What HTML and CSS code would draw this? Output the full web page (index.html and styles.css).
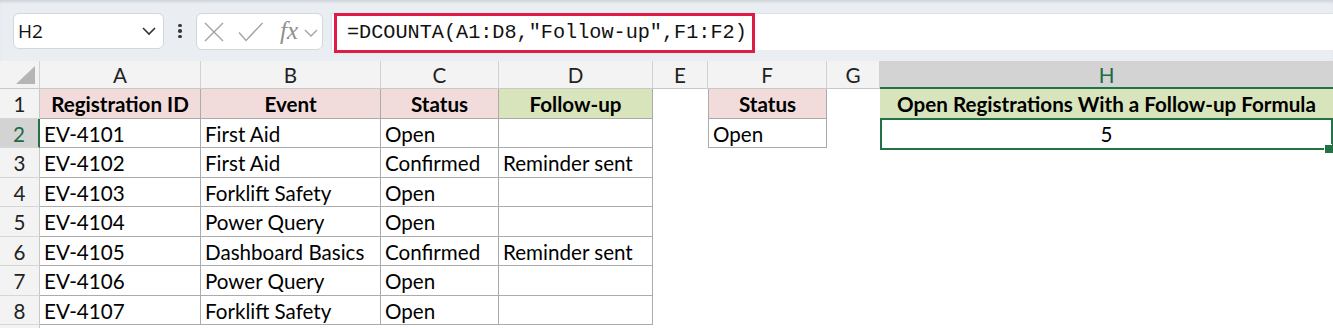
FILE: index.html
```html
<!DOCTYPE html>
<html lang="en">
<head>
    <meta charset="UTF-8">
    <meta name="viewport" content="width=device-width, initial-scale=1.0">
    <title>DCOUNTA - Follow-up</title>
    <link rel="stylesheet" href="styles.css">
</head>
<body>
    <!-- Formula bar -->
    <div class="formula-bar">
        <div class="name-box">
            <span>H2</span>
            <svg width="16" height="10" viewBox="0 0 16 10"><polyline points="2,2 8,8 14,2" fill="none" stroke="#333" stroke-width="1.6"/></svg>
        </div>
        <div class="dots"><i></i><i></i><i></i></div>
        <div class="icon-box">
            <svg width="20" height="20" viewBox="0 0 20 20"><path d="M1 1 L19 19 M19 1 L1 19" stroke="#a3a3a3" stroke-width="1.4" fill="none"/></svg>
            <svg width="26" height="20" viewBox="0 0 26 20"><polyline points="1,10.5 8,18.5 24.5,1" fill="none" stroke="#a3a3a3" stroke-width="1.4"/></svg>
            <span class="fx">fx</span>
            <svg width="14" height="8" viewBox="0 0 14 8"><polyline points="1,1 7,7 13,1" fill="none" stroke="#a3a3a3" stroke-width="1.4"/></svg>
        </div>
        <div class="formula-input">
            <div class="formula-text">=DCOUNTA(A1:D8,"Follow-up",F1:F2)</div>
        </div>
    </div>

    <!-- Sheet -->
    <div class="sheet">
        <div class="corner"><div class="tri"></div></div>
        <div class="ch">A</div>
        <div class="ch">B</div>
        <div class="ch">C</div>
        <div class="ch">D</div>
        <div class="ch">E</div>
        <div class="ch">F</div>
        <div class="ch">G</div>
        <div class="ch ch-sel">H</div>

        <div class="rh">1</div>
        <div class="c head pink">Registration ID</div>
        <div class="c head pink">Event</div>
        <div class="c head pink">Status</div>
        <div class="c head green">Follow-up</div>
        <div></div>
        <div class="c bl head pink">Status</div>
        <div></div>
        <div class="head green result-head">Open Registrations With a Follow-up Formula</div>

        <div class="rh rh-sel">2</div>
        <div class="c">EV-4101</div>
        <div class="c">First Aid</div>
        <div class="c">Open</div>
        <div class="c"></div>
        <div></div>
        <div class="c bl">Open</div>
        <div></div>
        <div class="result">5<span class="handle"></span></div>

        <div class="rh">3</div>
        <div class="c">EV-4102</div>
        <div class="c">First Aid</div>
        <div class="c">Confirmed</div>
        <div class="c">Reminder sent</div>
        <div></div><div></div><div></div><div></div>

        <div class="rh">4</div>
        <div class="c">EV-4103</div>
        <div class="c">Forklift Safety</div>
        <div class="c">Open</div>
        <div class="c"></div>
        <div></div><div></div><div></div><div></div>

        <div class="rh">5</div>
        <div class="c">EV-4104</div>
        <div class="c">Power Query</div>
        <div class="c">Open</div>
        <div class="c"></div>
        <div></div><div></div><div></div><div></div>

        <div class="rh">6</div>
        <div class="c">EV-4105</div>
        <div class="c">Dashboard Basics</div>
        <div class="c">Confirmed</div>
        <div class="c">Reminder sent</div>
        <div></div><div></div><div></div><div></div>

        <div class="rh">7</div>
        <div class="c">EV-4106</div>
        <div class="c">Power Query</div>
        <div class="c">Open</div>
        <div class="c"></div>
        <div></div><div></div><div></div><div></div>

        <div class="rh">8</div>
        <div class="c">EV-4107</div>
        <div class="c">Forklift Safety</div>
        <div class="c">Open</div>
        <div class="c"></div>
        <div></div><div></div><div></div><div></div>

        <div class="rh"></div>
    </div>
</body>
</html>
```
FILE: styles.css
```css
* {
    box-sizing: border-box;
}
body {
    margin: 0;
    background: #fff;
    font-family: Lato, "Open Sans", sans-serif;
    color: #000;
    overflow: hidden;
}

/* formula bar */
.formula-bar {
    height: 61px;
    background: #eaeef2;
    box-shadow: inset 0 3px 3px -1px #cfd3d8;
    display: flex;
    align-items: flex-start;
    padding: 13px 0 0 13px;
}
.name-box {
    width: 151px;
    height: 36px;
    background: #fff;
    border: 1px solid #d3d7dc;
    border-radius: 6px;
    display: flex;
    align-items: center;
    justify-content: space-between;
    padding: 0 6px 0 4px;
    font-family: "Open Sans", sans-serif;
    font-size: 19px;
    color: #111;
}
.dots {
    width: 32px;
    height: 36px;
    display: flex;
    flex-direction: column;
    align-items: center;
    justify-content: center;
    gap: 2px;
}
.dots i {
    width: 3.5px;
    height: 3.5px;
    background: #3a3a3a;
    border-radius: 50%;
}
.icon-box {
    width: 127px;
    height: 37px;
    background: #fff;
    border: 1px solid #d3d7dc;
    border-radius: 6px;
    display: flex;
    align-items: center;
    padding: 0 0 0 7px;
}
.icon-box svg:nth-child(2) {
    margin-left: 14px;
}
.fx {
    margin-left: 16px;
    font-family: "Liberation Serif", serif;
    font-style: italic;
    font-size: 25px;
    color: #8f8f8f;
    line-height: 1;
    margin-top: -3px;
}
.icon-box svg:last-child {
    margin-left: 6px;
    margin-top: 2px;
}
.formula-input {
    flex: 1;
    height: 37px;
    margin-left: 8px;
    background: #fff;
    border-top: 1px solid #dde1e6;
    border-left: 1px solid #dde1e6;
    display: flex;
    align-items: center;
    padding-left: 2px;
}
.formula-text {
    width: 421px;
    height: 40px;
    margin-top: 1px;
    border: 3px solid #df1c48;
    display: flex;
    align-items: center;
    padding: 0 0 0 10px;
    font-family: "Liberation Mono", monospace;
    font-size: 20.2px;
    color: #111;
    white-space: nowrap;
}

/* sheet */
.sheet {
    display: grid;
    grid-template-columns: 40px 161px 180px 118px 154px 55px 119px 53px 453px;
    grid-template-rows: 28px repeat(8, 29.5px) 10px;
    font-size: 20.6px;
}
.corner {
    background: #f3f3f3;
    border-right: 1px solid #d2d2d2;
    border-bottom: 1px solid #c8c8c8;
    display: flex;
    align-items: flex-end;
    justify-content: flex-end;
    padding: 0 4px 4px 0;
}
.tri {
    width: 19px;
    height: 18px;
    background: #b5b5b5;
    clip-path: polygon(100% 0, 100% 100%, 0 100%);
}
.ch {
    background: #f3f3f3;
    border-right: 1px solid #d2d2d2;
    border-bottom: 1px solid #c8c8c8;
    text-align: center;
    line-height: 28px;
    color: #222;
}
.ch-sel {
    background: #d3d3d3;
    color: #1d6b41;
    border-bottom: 2px solid #217346;
    border-right: none;
}
.rh {
    background: #f3f3f3;
    border-right: 1px solid #c8c8c8;
    border-bottom: 1px solid #d6d6d6;
    text-align: center;
    line-height: 30px;
    color: #222;
}
.rh-sel {
    background: #d3d3d3;
    color: #1d6b41;
    border-right: 2px solid #217346;
}
.c {
    border-right: 1px solid #ababab;
    border-bottom: 1px solid #ababab;
    padding-left: 4px;
    line-height: 30px;
    white-space: nowrap;
    overflow: hidden;
}
.bl {
    border-left: 1px solid #ababab;
}
.head {
    font-weight: bold;
    text-align: center;
    padding-left: 0;
    line-height: 30px;
}
.pink {
    background: #f2dcdb;
}
.green {
    background: #d8e4bc;
}
.result-head {
    white-space: nowrap;
}
.result {
    position: relative;
    z-index: 1;
    text-align: center;
    line-height: 30px;
}
.result::after {
    content: "";
    position: absolute;
    inset: -1px 0 -2px 0;
    border: 2px solid #217346;
}
.handle {
    position: absolute;
    right: 0;
    bottom: -5px;
    width: 8px;
    height: 8px;
    background: #217346;
    box-shadow: -1px -1px 0 #fff;
    z-index: 2;
}
```
